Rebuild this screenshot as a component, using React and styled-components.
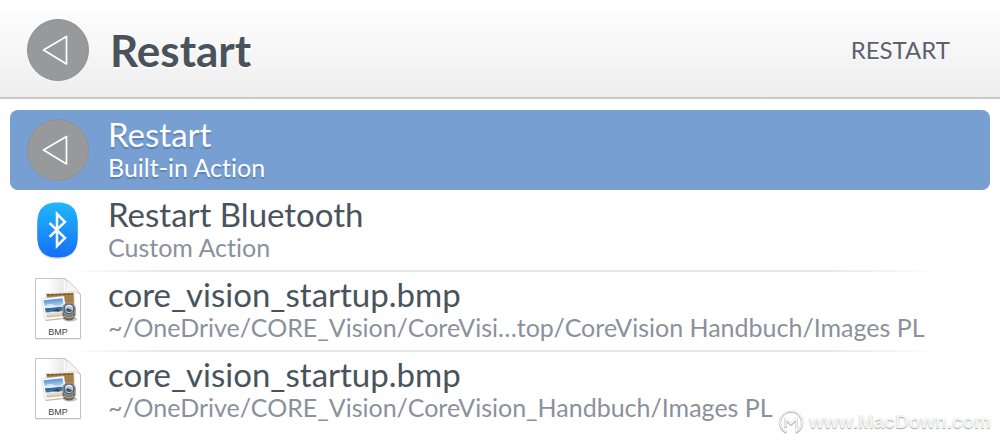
import React, { useId, useState } from 'react'
import styled, { createGlobalStyle } from 'styled-components'

const GlobalStyle = createGlobalStyle`
  * {
    box-sizing: border-box;
  }
  body {
    margin: 0;
    background: #fff;
    font-family: Lato, 'Open Sans', sans-serif;
    font-variant-ligatures: none;
  }
`

const Window = styled.main`
  position: relative;
  padding-bottom: 10px;
`

const Header = styled.header`
  display: flex;
  align-items: center;
  gap: 20px;
  padding: 18px 50px 15px 26px;
  background: linear-gradient(#fff, #eee);
  border-bottom: 2px solid #c9c9c9;
`

const Title = styled.h1`
  flex: 1;
  margin: 0;
  font-size: 44px;
  line-height: 64px;
  font-weight: 700;
  color: #48535c;
  text-shadow: 0 2px 0 #fff;
`

const Tag = styled.span`
  font-size: 24px;
  line-height: 32px;
  color: #5c626d;
  text-shadow: 0 1px 0 #fff;
`

const List = styled.ul`
  list-style: none;
  margin: 0;
  padding: 11px 10px 0;
`

const Item = styled.li`
  background: ${({ $divided }) => $divided
    ? 'linear-gradient(90deg, transparent 6%, #e6e6e6 16%, #e6e6e6 83%, transparent 95%) top / 100% 2px no-repeat'
    : 'none'};
`

const Row = styled.button`
  display: flex;
  align-items: center;
  gap: 18px;
  width: 100%;
  height: 80px;
  padding: 0 16px;
  border: 0;
  border-radius: 8px;
  background: ${({ $active }) => $active ? '#779fd2' : 'transparent'};
  color: ${({ $active }) => $active ? '#fff' : '#48535c'};
  text-shadow: ${({ $active }) => $active ? '0 2px 1px rgba(40, 70, 120, 0.35)' : 'none'};
  font-family: inherit;
  font-variant-ligatures: none;
  text-align: left;
`

const IconBox = styled.span`
  flex: none;
  display: flex;
  justify-content: center;
  width: 64px;
  & svg {
    display: block;
  }
`

const Text = styled.span`
  min-width: 0;
  padding-bottom: 2px;
`

const Name = styled.span`
  display: block;
  font-size: 33px;
  line-height: 36px;
`

const Detail = styled.span`
  display: block;
  font-size: 25px;
  line-height: 30px;
  white-space: nowrap;
  color: ${({ $active }) => $active ? '#fff' : '#8b919c'};
`

const Watermark = styled.div`
  position: absolute;
  right: 9px;
  bottom: 4px;
  display: flex;
  align-items: center;
  gap: 5px;
  font-family: 'Liberation Sans', Arial, sans-serif;
  font-size: 19px;
  line-height: 26px;
  font-weight: 700;
  color: #f4f4f4;
  text-shadow: 0 1px 1px #aaa;
  pointer-events: none;
`

const BackIcon = () => (
  <svg width="64" height="64" viewBox="0 0 64 64" aria-hidden="true">
    <circle cx="32" cy="32" r="30.5" fill="#98999b" stroke="#8f9092" />
    <path d="M17.5 32 40.5 18.5V46Z" fill="none" stroke="#fff" strokeWidth="1.7" strokeLinejoin="round" />
  </svg>
)

const BluetoothIcon = () => {
  const id = useId()
  return (
    <svg width="48" height="62" viewBox="0 0 48 62" aria-hidden="true">
      <defs>
        <linearGradient id={id} x1="0" y1="0" x2="0" y2="1">
          <stop offset="0" stopColor="#20b8fa" />
          <stop offset="1" stopColor="#146ff8" />
        </linearGradient>
      </defs>
      <path d="M23.5 5C37.5 5 44 11 44 26V38C44 53 37.5 60 23.5 60S3 53 3 38V26C3 11 9.5 5 23.5 5Z" fill="#000" opacity=".12" />
      <path d="M23.5 3.5C37.5 3.5 43.7 10 43.7 25V37C43.7 52 37.5 58.5 23.5 58.5S3.3 52 3.3 37V25C3.3 10 9.5 3.5 23.5 3.5Z" fill={`url(#${id})`} />
      <path d="M15.5 25 31 40 23 48.5V16L31 24 15.5 39" fill="none" stroke="#0b56bd" strokeOpacity=".35" strokeWidth="2.6" />
      <path d="M15.5 24 31 39 23 47V15L31 23 15.5 38" fill="none" stroke="#f3f5f6" strokeWidth="2.6" />
    </svg>
  )
}

const BmpIcon = () => {
  const id = useId()
  return (
    <svg width="48" height="64" viewBox="0 0 48 64" aria-hidden="true">
      <defs>
        <linearGradient id={`${id}s`} x1="0" y1="0" x2="0.1" y2="1">
          <stop offset="0" stopColor="#3f86d2" />
          <stop offset=".4" stopColor="#a3c9ea" />
          <stop offset=".5" stopColor="#dfeaf2" />
          <stop offset=".54" stopColor="#2f659f" />
          <stop offset=".7" stopColor="#3a78b2" />
          <stop offset=".76" stopColor="#f0ece2" />
          <stop offset="1" stopColor="#d0b890" />
        </linearGradient>
        <linearGradient id={`${id}f`} x1="0" y1="1" x2="1" y2="0">
          <stop offset="0" stopColor="#fff" />
          <stop offset=".55" stopColor="#f2f2f2" />
          <stop offset="1" stopColor="#bdbdbd" />
        </linearGradient>
        <linearGradient id={`${id}p`} x1="0" y1="0" x2="1" y2="0">
          <stop offset=".4" stopColor="#fff" />
          <stop offset=".9" stopColor="#ececec" />
        </linearGradient>
      </defs>
      <path d="M1.5 1.5H31L47 17V61.5H1.5Z" fill="#000" opacity=".16" />
      <path d="M1.5 .5H30Q35 2 46.5 16.5V60.5H1.5Z" fill="#fff" stroke="#b9b9b9" strokeWidth=".8" />
      <path d="M2 1H30V15H2Z" fill={`url(#${id}p)`} />
      <path d="M30 .5Q33.5 4 31.5 14.5Q41 11.500 46.500 17Q39 5 30 .5Z" fill={`url(#${id}f)`} stroke="#bababa" strokeWidth=".5" />
      <path d="M12 15.500 40 14.500 40.500 34 14 36Z" fill="#a67f42" stroke="#e8e4dc" strokeWidth="1" />
      <path d="M13 17 39 16" stroke="#6f5527" strokeWidth="1.300" strokeDasharray="3 1" />
      <path d="M8 22 30.500 19.500 34 40.500 11.800 43Z" fill="#000" opacity=".3" />
      <path d="M7.500 20.500 30 18 33.500 39.500 11.300 42Z" fill="#fff" stroke="#c4c4c4" strokeWidth=".5" />
      <path d="M9.500 22.300 28.500 20.200 31.500 37.700 12.700 39.800Z" fill={`url(#${id}s)`} />
      <path d="M11 28Q16 24 20 27T29.500 24.500V27Q20 29.500 11.300 30Z" fill="#fff" opacity=".5" />
      <path d="M19 33 24 31 26 33.500Z" fill="#293b46" />
      <ellipse cx="36" cy="41" rx="7" ry="2.500" fill="#000" opacity=".25" />
      <path d="M28.500 31V37Q30 42.500 35 42.500T41.500 37V31Z" fill="#6e645a" />
      <path d="M29.500 37.500Q35 42 41 37.500" fill="none" stroke="#b5a68f" strokeWidth="1.200" />
      <circle cx="35" cy="31" r="6.400" fill="#70716f" stroke="#a2a2a0" strokeWidth="1" />
      <circle cx="35" cy="31" r="4.600" fill="#b4cbdb" stroke="#4b5154" strokeWidth=".8" />
      <path d="M31.200 32 34 30 38.500 32.500Q35 36 31.200 32Z" fill="#3d5770" />
      <path d="M31.500 28.500Q35 25.500 38.500 28.500" fill="none" stroke="#fff" strokeWidth="1" />
      <text x="24" y="57" textAnchor="middle" fontFamily="'Liberation Sans', Arial, sans-serif" fontSize="9" fill="#444">BMP</text>
    </svg>
  )
}

const LogoIcon = () => (
  <svg width="26" height="28" viewBox="0 0 26 28" aria-hidden="true">
    <g fill="none" strokeLinejoin="round">
      <path d="M8.5 24.5A11 11 0 1 1 17.5 24.5" stroke="#b4b4b4" strokeWidth="2.5" />
      <path d="M7.5 20V11L13 16.500 18.500 11V21" stroke="#b4b4b4" strokeWidth="2.600" />
      <path d="M8.500 23.800A11 11 0 1 1 17.500 23.800" stroke="#f1f1f1" strokeWidth="1.800" />
      <path d="M7.500 19V10L13 15.500 18.500 10V23" stroke="#f4f4f4" strokeWidth="2" />
    </g>
  </svg>
)

const items = [
  {
    name: 'Restart',
    detail: 'Built-in Action',
    Icon: BackIcon
  },
  {
    name: 'Restart Bluetooth',
    detail: 'Custom Action',
    Icon: BluetoothIcon
  },
  {
    name: 'core_vision_startup.bmp',
    detail: '~/OneDrive/CORE_Vision/CoreVisi…top/CoreVision Handbuch/Images PL',
    Icon: BmpIcon
  },
  {
    name: 'core_vision_startup.bmp',
    detail: '~/OneDrive/CORE_Vision/CoreVision_Handbuch/Images PL',
    Icon: BmpIcon
  }
]

const App = () => {
  const [active, setActive] = useState(0)

  return (
    <Window>
      <GlobalStyle />
      <Header>
        <IconBox><BackIcon /></IconBox>
        <Title>Restart</Title>
        <Tag>RESTART</Tag>
      </Header>
      <List>
        {items.map(({ name, detail, Icon }, key) => (
          <Item key={key} $divided={key > 1}>
            <Row type="button" $active={key === active} onClick={() => setActive(key)}>
              <IconBox><Icon /></IconBox>
              <Text>
                <Name>{name}</Name>
                <Detail $active={key === active}>{detail}</Detail>
              </Text>
            </Row>
          </Item>
        ))}
      </List>
      <Watermark>
        <LogoIcon />
        <span>www.MacDown.com</span>
      </Watermark>
    </Window>
  )
}

export default App
